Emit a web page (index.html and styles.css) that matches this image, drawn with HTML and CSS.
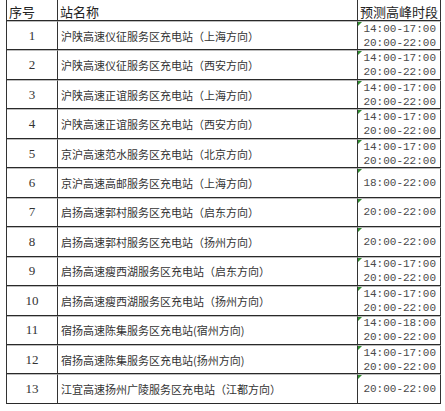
FILE: index.html
```html
<!DOCTYPE html>
<html lang="zh">
<head>
<meta charset="utf-8">
<link rel="stylesheet" href="styles.css">
</head>
<body>
<div class="sheet">
  <div class="cell head c1">序号</div>
  <div class="cell head c2">站名称</div>
  <div class="cell head c3">预测高峰时段</div>

  <div class="cell num">1</div>
  <div class="cell name">沪陕高速仪征服务区充电站（上海方向）</div>
  <div class="cell time"><span>14:00-17:00</span><span>20:00-22:00</span></div>

  <div class="cell num">2</div>
  <div class="cell name">沪陕高速仪征服务区充电站（西安方向）</div>
  <div class="cell time"><span>14:00-17:00</span><span>20:00-22:00</span></div>

  <div class="cell num">3</div>
  <div class="cell name">沪陕高速正谊服务区充电站（上海方向）</div>
  <div class="cell time"><span>14:00-17:00</span><span>20:00-22:00</span></div>

  <div class="cell num">4</div>
  <div class="cell name">沪陕高速正谊服务区充电站（西安方向）</div>
  <div class="cell time"><span>14:00-17:00</span><span>20:00-22:00</span></div>

  <div class="cell num">5</div>
  <div class="cell name">京沪高速范水服务区充电站（北京方向）</div>
  <div class="cell time"><span>14:00-17:00</span><span>20:00-22:00</span></div>

  <div class="cell num">6</div>
  <div class="cell name">京沪高速高邮服务区充电站（上海方向）</div>
  <div class="cell time"><span>18:00-22:00</span></div>

  <div class="cell num">7</div>
  <div class="cell name">启扬高速郭村服务区充电站（启东方向）</div>
  <div class="cell time"><span>20:00-22:00</span></div>

  <div class="cell num">8</div>
  <div class="cell name">启扬高速郭村服务区充电站（扬州方向）</div>
  <div class="cell time"><span>20:00-22:00</span></div>

  <div class="cell num">9</div>
  <div class="cell name">启扬高速瘦西湖服务区充电站（启东方向）</div>
  <div class="cell time"><span>14:00-17:00</span><span>20:00-22:00</span></div>

  <div class="cell num">10</div>
  <div class="cell name">启扬高速瘦西湖服务区充电站（扬州方向）</div>
  <div class="cell time"><span>14:00-17:00</span><span>20:00-22:00</span></div>

  <div class="cell num">11</div>
  <div class="cell name">宿扬高速陈集服务区充电站(宿州方向)</div>
  <div class="cell time"><span>14:00-18:00</span><span>20:00-22:00</span></div>

  <div class="cell num">12</div>
  <div class="cell name">宿扬高速陈集服务区充电站(扬州方向)</div>
  <div class="cell time"><span>14:00-17:00</span><span>20:00-22:00</span></div>

  <div class="cell num">13</div>
  <div class="cell name">江宜高速扬州广陵服务区充电站（江都方向）</div>
  <div class="cell time"><span>20:00-22:00</span></div>
</div>
</body>
</html>
```

FILE: styles.css
```css
html, body {
  margin: 0;
  padding: 0;
  background: #ffffff;
}

.sheet {
  display: grid;
  grid-template-columns: 51px 300px 83px;
  grid-template-rows: 21px repeat(13, 29.46px);
  margin-left: 6px;
  border-left: 1px solid #333;
  width: max-content;
  font-family: "Noto Sans CJK SC", sans-serif;
  color: #2a2a2a;
}

.cell {
  box-sizing: border-box;
  border-right: 1px solid #333;
  border-bottom: 1px solid #2a2a2a;
  border-top: 1px solid #bdbdbd;
  display: flex;
  align-items: center;
  overflow: hidden;
  white-space: nowrap;
}

.head {
  border-top: none;
  font-size: 13px;
  align-items: flex-end;
  line-height: 17px;
  padding-left: 2px;
  color: #222;
}

.num {
  justify-content: center;
  font-family: "Liberation Serif", serif;
  font-size: 13px;
  color: #333;
}

.name {
  font-size: 11px;
  padding-left: 3px;
  color: #333;
}

.time {
  position: relative;
  flex-direction: column;
  justify-content: center;
  align-items: flex-end;
  padding-right: 4px;
  font-family: "Liberation Mono", monospace;
  font-size: 11px;
  line-height: 14px;
  color: #4a4a4a;
}

.time::before {
  content: "";
  position: absolute;
  left: 0;
  top: 0;
  width: 0;
  height: 0;
  border-top: 4px solid #2f8a2f;
  border-right: 4px solid transparent;
}
```
